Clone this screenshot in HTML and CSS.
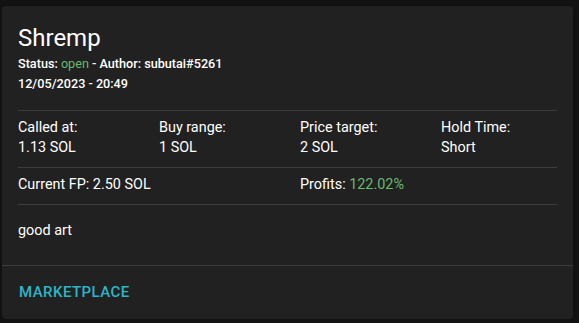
FILE: index.html
```html
<!DOCTYPE html>
<html lang="en">
<head>
    <meta charset="UTF-8">
    <meta name="viewport" content="width=device-width, initial-scale=1.0">
    <title>Call - Shremp</title>
    <link rel="stylesheet" href="styles.css">
</head>
<body>

    <div class="card">
        <div class="card-content">
            <h2 class="title">Shremp</h2>
            <div class="meta">Status: <span class="green normal">open</span> - Author: subutai#5261</div>
            <div class="meta">12/05/2023 - 20:49</div>

            <div class="divider first"></div>
            <div class="row grid4">
                <div>
                    <div>Called at:</div>
                    <div>1.13 SOL</div>
                </div>
                <div>
                    <div>Buy range:</div>
                    <div>1 SOL</div>
                </div>
                <div>
                    <div>Price target:</div>
                    <div>2 SOL</div>
                </div>
                <div>
                    <div>Hold Time:</div>
                    <div>Short</div>
                </div>
            </div>
            <div class="divider"></div>
            <div class="row grid2">
                <div>Current FP: 2.50 SOL</div>
                <div>Profits: <span class="green">122.02%</span></div>
            </div>
            <div class="divider"></div>
            <p class="note">good art</p>
        </div>
        <div class="card-divider"></div>
        <div class="card-actions">
            <a class="btn" href="#">Marketplace</a>
        </div>
    </div>

</body>
</html>
```

FILE: styles.css
```css
body {
    font-family: Roboto, 'Liberation Sans', sans-serif;
    background-color: #121212;
    color: #fff;
    margin: 0;
    padding: 6px 6px 0 2px;
}
.card {
    width: 571px;
    background: #212121;
    border-radius: 4px;
    box-shadow: 0px 2px 1px -1px rgba(0, 0, 0, 0.2), 0px 1px 3px 0px rgba(0, 0, 0, 0.12);
}
.card-content {
    padding: 16px 16px 24px;
}
.title {
    font-size: 24px;
    font-weight: 400;
    line-height: 32px;
    margin: 0;
}
.meta {
    font-size: 12.65px;
    font-weight: 500;
    line-height: 20px;
}
.green {
    color: #66bb6a;
}
.normal {
    font-weight: 400;
}
.divider {
    height: 1px;
    background: rgba(255, 255, 255, 0.12);
}
.divider.first {
    margin-top: 16px;
}
.row {
    font-size: 14.4px;
    line-height: 20px;
    padding: 7px 0 9px;
}
.grid4 {
    display: grid;
    grid-template-columns: repeat(4, 141px);
}
.grid2 {
    display: grid;
    grid-template-columns: repeat(2, 282px);
}
.note {
    font-size: 14.4px;
    line-height: 20px;
    margin: 0;
    padding-top: 16px;
}
.card-divider {
    height: 1px;
    background: rgba(255, 255, 255, 0.12);
}
.card-actions {
    padding: 8px;
    display: flex;
}
.btn {
    display: inline-block;
    padding: 6px 8px 6px 9px;
    font-size: 15px;
    font-weight: 500;
    line-height: 24.5px;
    letter-spacing: 0.45px;
    text-transform: uppercase;
    text-decoration: none;
    color: #2bb6c9;
    border-radius: 4px;
}
```
